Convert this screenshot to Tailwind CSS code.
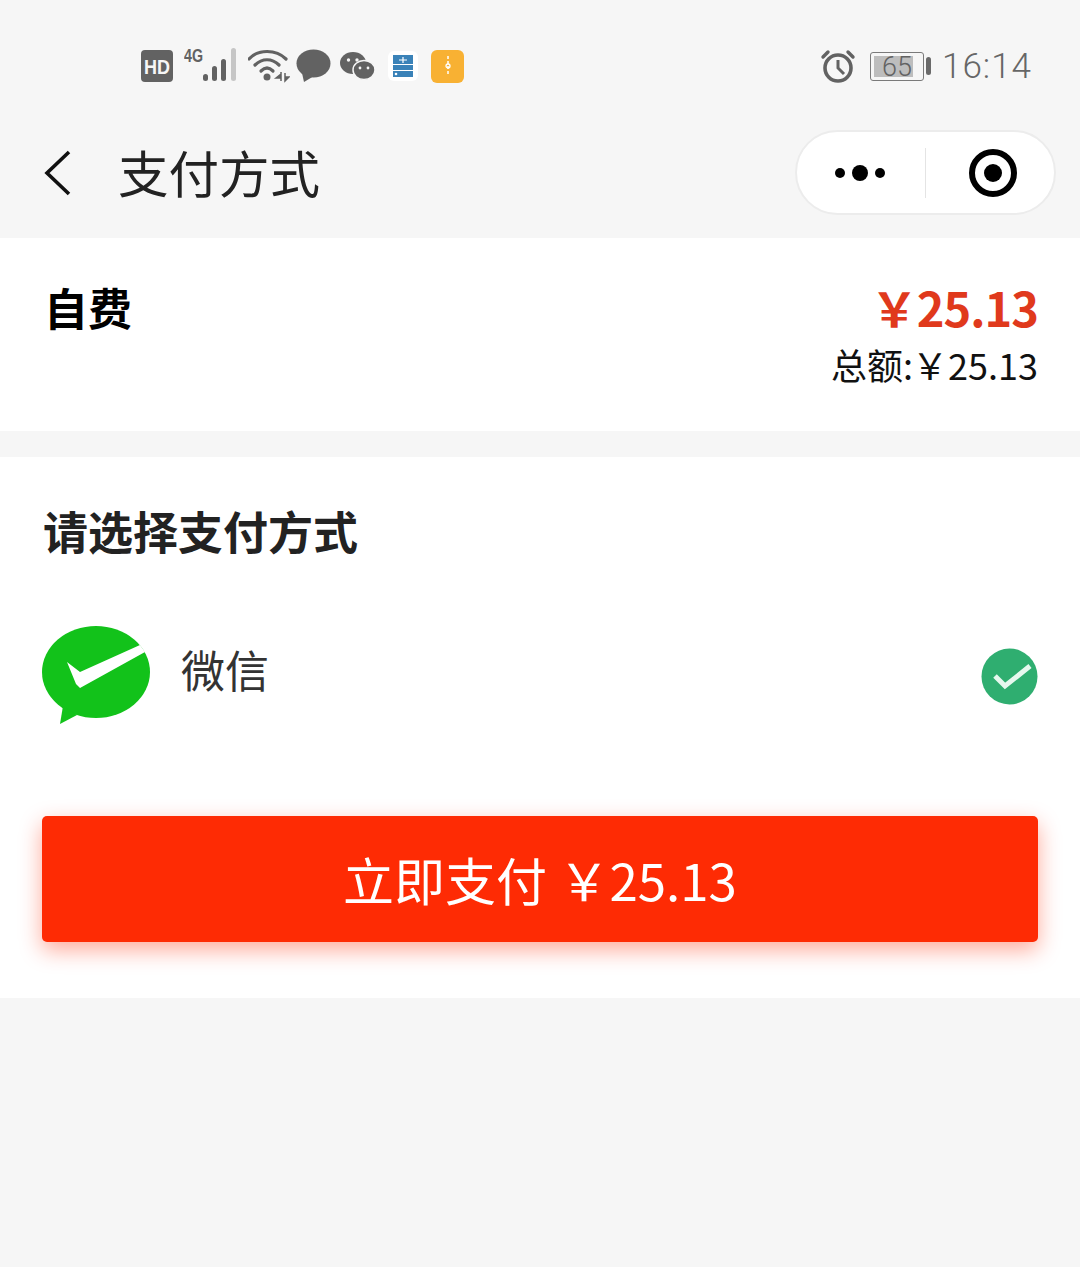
<!DOCTYPE html>
<html lang="zh-CN">

<head>
    <meta charset="UTF-8">
    <title>支付方式</title>
    <script src="https://cdn.jsdelivr.net/npm/@tailwindcss/browser@4"></script>
</head>

<body class="bg-[#f6f6f6] font-['Noto_Sans_CJK_SC','Noto_Sans',sans-serif] h-[1267px] w-[1080px] overflow-hidden">
    <!-- Status bar -->
    <div class="h-[130px] flex items-start pt-[46px] pl-[140px] pr-[48px] justify-between">
        <div class="flex items-center h-[40px]">
            <svg width="34" height="34" viewBox="0 0 34 34" class="mr-[10px]">
                <rect x="1" y="1" width="32" height="32" rx="4" fill="#626262" />
                <text x="17" y="25" text-anchor="middle" font-size="21" font-weight="700" fill="#f6f6f6" font-family="Liberation Sans" textLength="26" lengthAdjust="spacingAndGlyphs">HD</text>
            </svg>
            <svg width="56" height="40" viewBox="0 0 56 40" class="mr-[8px]">
                <text x="0" y="16" font-size="19" font-weight="700" fill="#626262" font-family="Liberation Sans" textLength="19" lengthAdjust="spacingAndGlyphs">4G</text>
                <rect x="19" y="28" width="5" height="7" rx="2.500" fill="#626262" />
                <rect x="28" y="20" width="5" height="15" rx="2.500" fill="#626262" />
                <rect x="37" y="13" width="5" height="22" rx="2.500" fill="#626262" />
                <rect x="47" y="2" width="5" height="33" rx="2.500" fill="#c6c6c6" />
            </svg>
            <svg width="42" height="36" viewBox="0 0 42 36" class="mr-[6px]">
                <g fill="none" stroke="#626262" stroke-width="3.200" stroke-linecap="round">
                    <path d="M1 11C10 1 28 1 38 11" />
                    <path d="M7 17C14 10 24 10 31 17" />
                    <path d="M13 23C17 19 21 19 25 23" />
                </g>
                <circle cx="19" cy="29" r="3.500" fill="#626262" />
                <path d="M33 24V33M37 25V33M28 30L33 26V30ZM37 29H41L37 33Z" stroke="#626262" stroke-width="1.500" fill="#626262" />
            </svg>
            <svg width="36" height="34" viewBox="0 0 36 34" class="mr-[8px]">
                <ellipse cx="17.500" cy="14.500" rx="17" ry="14" fill="#626262" />
                <path d="M6 24L8 33L18 27Z" fill="#626262" />
            </svg>
            <svg width="36" height="32" viewBox="0 0 36 32" class="mr-[12px]">
                <ellipse cx="13" cy="13" rx="13" ry="11" fill="#626262" />
                <ellipse cx="24" cy="20" rx="11" ry="9.500" stroke="#f6f6f6" stroke-width="1.500" fill="#626262" />
                <circle cx="8.500" cy="10" r="1.700" fill="#f6f6f6" />
                <circle cx="17" cy="10" r="1.700" fill="#f6f6f6" />
                <circle cx="20" cy="18" r="1.400" fill="#f6f6f6" />
                <circle cx="28" cy="18" r="1.400" fill="#f6f6f6" />
            </svg>
            <div class="w-[30px] h-[30px] bg-white rounded-md flex items-center justify-center mr-[13px]">
                <svg width="20" height="22" viewBox="0 0 20 22">
                    <rect width="20" height="22" fill="#3a82b8" />
                    <path d="M0 9.500H20M0 15.500H20M10 2V8M6 5H14" stroke="#fff" stroke-width="1.200" />
                    <circle cx="3" cy="19" r="1.300" fill="#fff" />
                </svg>
            </div>
            <div class="w-[33px] h-[33px] bg-[#f8b133] rounded-md flex items-center justify-center">
                <svg width="6" height="20" viewBox="0 0 6 20">
                    <path d="M3 0V20" stroke="#fff" stroke-width="1.500" stroke-dasharray="3 2" />
                    <circle cx="3" cy="10" r="2" fill="none" stroke="#fff" stroke-width="1.300" />
                </svg>
            </div>
        </div>
        <div class="flex items-center h-[40px]">
            <svg width="36" height="36" viewBox="0 0 36 36" class="mr-[14px]">
                <circle cx="18" cy="20" r="13" fill="none" stroke="#626262" stroke-width="3.600" />
                <path d="M18 12V20L24 26" fill="none" stroke="#626262" stroke-width="3" />
                <path d="M3 9L8 4M33 9L28 4" stroke="#626262" stroke-width="3.400" stroke-linecap="round" />
            </svg>
            <div class="relative w-[54px] h-[29px] border border-[#7a7a7a] rounded-[3px] mr-[2px]">
                <div class="absolute left-[3px] top-[3px] bottom-[3px] w-[39px] bg-[#bdbdbd]"></div>
                <span class="absolute inset-0 text-center text-[27px] leading-[28px] text-[#626262] font-['Roboto'] font-light">65</span>
            </div>
            <div class="w-[5px] h-[18px] bg-[#6a6a6a] rounded-sm mr-[11px]"></div>
            <span class="text-[35px] leading-[40px] mt-[2px] text-[#666] font-['Roboto'] font-light tracking-[1px]">16:14</span>
        </div>
    </div>

    <!-- Title bar -->
    <div class="h-[108px] flex items-start justify-between pl-[44px] pr-[24px]">
        <div class="flex items-center h-[86px]">
            <svg width="28" height="46" viewBox="0 0 28 46" class="mr-[46px]">
                <path d="M25 2L3 23L25 44" fill="none" stroke="#111" stroke-width="3.600" />
            </svg>
            <h1 class="text-[50.5px] leading-[86px] -mt-[4px] text-[#222]">支付方式</h1>
        </div>
        <div class="w-[261px] h-[85px] rounded-full bg-white border-2 border-[#ececec] flex items-center">
            <div class="w-[128px] pr-[3px] flex items-center justify-center gap-[7px]">
                <span class="w-[10px] h-[10px] rounded-full bg-black"></span>
                <span class="w-[16px] h-[16px] rounded-full bg-black"></span>
                <span class="w-[10px] h-[10px] rounded-full bg-black"></span>
            </div>
            <div class="w-px h-[50px] bg-[#e4e4e4]"></div>
            <div class="flex-1 pl-[5px] flex items-center justify-center">
                <div class="w-[48px] h-[48px] rounded-full border-[6px] border-black flex items-center justify-center">
                    <span class="w-[18px] h-[18px] rounded-full bg-black"></span>
                </div>
            </div>
        </div>
    </div>

    <!-- Self pay -->
    <section class="h-[193px] bg-white flex justify-between pl-[44px] pr-[42px]">
        <h2 class="text-[44px] leading-[60px] mt-[39px] font-bold text-black">自费</h2>
        <div class="text-right mt-[37px]">
            <p class="text-[47px] leading-[64px] font-bold text-[#e0391c] tracking-[-1px]">￥25.13</p>
            <p class="text-[36px] leading-[50px] text-[#111] [word-spacing:-9px]">总额: ￥25.13</p>
        </div>
    </section>

    <!-- Payment method -->
    <section class="mt-[26px] h-[541px] bg-white px-[42px] flex flex-col">
        <h2 class="text-[45px] leading-[60px] mt-[44px] ml-[1px] font-bold text-[#222]">请选择支付方式</h2>
        <div class="mt-[63px] h-[100px] flex items-center justify-between">
            <div class="flex items-center">
                <svg width="108" height="100" viewBox="0 0 108 100" class="mr-[31px] mt-[4px]">
                    <ellipse cx="54" cy="46" rx="54" ry="46" fill="#12c21a" />
                    <path d="M21 80L18 98L35 89Z" fill="#12c21a" />
                    <path d="M25 36L38 46L98 19L103 26L38 62L34 58Z" fill="#fff" />
                </svg>
                <span class="text-[44px] leading-[60px] text-[#333] -mt-[10px]">微信</span>
            </div>
            <svg width="57" height="57" viewBox="0 0 57 57" class="mt-[5px]">
                <circle cx="28.500" cy="28.500" r="28" fill="#2fae70" />
                <path d="M14 28L24 38L49 18" fill="none" stroke="#e6f8ee" stroke-width="5" />
            </svg>
        </div>
        <button class="mt-[92px] h-[126px] w-full rounded-[5px] bg-[#fe2b04] text-white text-[51px] leading-[126px] shadow-[0_8px_22px_rgba(254,43,4,0.4)]">立即支付 ￥25.13</button>
    </section>
</body>

</html>
